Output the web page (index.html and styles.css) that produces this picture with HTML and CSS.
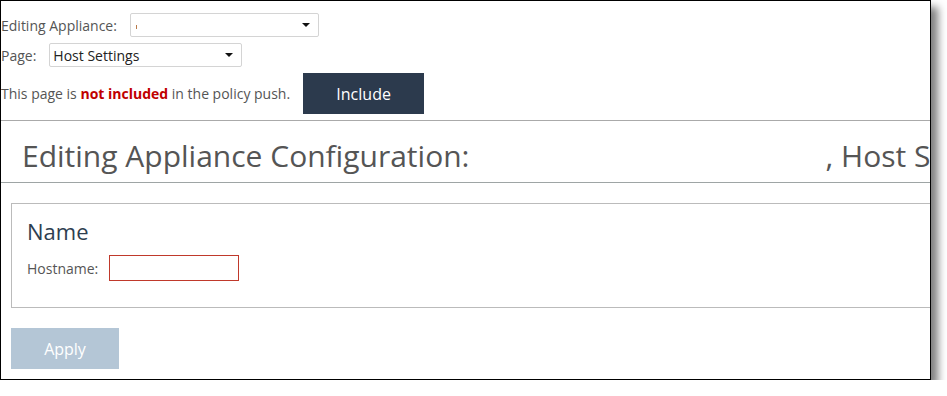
FILE: index.html
```html
<!DOCTYPE html>
<html lang="en">

<head>
    <meta charset="UTF-8">
    <meta name="viewport" content="width=device-width, initial-scale=1.0">
    <title>Editing Appliance Configuration</title>
    <link rel="stylesheet" href="styles.css">
</head>

<body>
    <div class="frame">
        <div class="policy-bar">
            <div class="policy-row">
                <label>Editing Appliance:</label>
                <div class="select select-appliance">
                    <span class="select-value"><span class="stub"></span></span>
                    <span class="caret"></span>
                </div>
            </div>
            <div class="policy-row">
                <label>Page:</label>
                <div class="select select-page">
                    <span class="select-value">Host Settings</span>
                    <span class="caret"></span>
                </div>
            </div>
            <div class="policy-row">
                <span class="push-note">This page is <strong>not included</strong> in the policy push.</span>
                <button class="btn btn-include">Include</button>
            </div>
        </div>

        <div class="page-title">
            <h1>Editing Appliance Configuration:<span class="appliance-name"></span>, Host Settings</h1>
        </div>

        <div class="panel">
            <h2>Name</h2>
            <div class="field">
                <label for="hostname">Hostname:</label>
                <input type="text" id="hostname" class="input-error">
            </div>
        </div>

        <button class="btn btn-apply">Apply</button>
    </div>
</body>

</html>
```

FILE: styles.css
```css
* {
    box-sizing: border-box;
}

body {
    margin: 0;
    background-color: #fff;
    font-family: 'Open Sans', 'Liberation Sans', sans-serif;
    color: #555;
}

.frame {
    width: 931px;
    height: 380px;
    border: 1px solid #000;
    overflow: hidden;
    background-color: #fff;
    box-shadow: 7px 7px 8px rgba(0, 0, 0, 0.5);
}

.policy-bar {
    display: flex;
    flex-direction: column;
    gap: 6px;
    padding-top: 12px;
    padding-bottom: 6px;
    border-bottom: 1px solid #aaa;
}

.policy-row {
    display: flex;
    align-items: center;
    gap: 13px;
    font-size: 14px;
    color: #555;
}

.select {
    display: flex;
    align-items: center;
    justify-content: space-between;
    height: 24px;
    padding: 0 8px 0 3px;
    border: 1px solid #d4d4d4;
    border-radius: 2px;
    background-color: #fff;
}

.select-appliance {
    width: 189px;
}

.select-page {
    width: 193px;
}

.select-value {
    font-size: 14px;
    color: #222;
}

.stub {
    display: inline-block;
    width: 1px;
    height: 4px;
    margin-left: 2px;
    background-color: #b97a4a;
    vertical-align: middle;
}

.caret {
    width: 0;
    height: 0;
    border-left: 4px solid transparent;
    border-right: 4px solid transparent;
    border-top: 4px solid #111;
}

.push-note strong {
    color: #c00000;
    font-weight: bold;
}

.btn {
    border: none;
    color: #fff;
    font-family: 'Open Sans', 'Liberation Sans', sans-serif;
    cursor: pointer;
}

.btn-include {
    width: 121px;
    height: 41px;
    font-size: 16px;
    background-color: #2c3a4d;
}

.page-title {
    height: 62px;
    display: flex;
    align-items: center;
    padding-top: 8px;
    padding-left: 21px;
    border-bottom: 1px solid #9ea5a5;
}

.page-title h1 {
    margin: 0;
    font-size: 30px;
    font-weight: normal;
    color: #555;
    white-space: nowrap;
}

.appliance-name {
    display: inline-block;
    width: 356px;
}

.panel {
    width: 960px;
    margin: 20px 0 20px 10px;
    padding: 12px 15px 26px;
    border: 1px solid #bbb;
}

.panel h2 {
    margin: 0 0 9px;
    font-size: 22px;
    font-weight: normal;
    color: #2e3e50;
}

.field {
    display: flex;
    align-items: center;
    gap: 11px;
    font-size: 14px;
}

.field input {
    width: 130px;
    height: 26px;
    border: 1px solid #ccc;
}

.field .input-error {
    border-color: #c0392b;
}

.btn-apply {
    display: block;
    margin-left: 10px;
    width: 108px;
    height: 41px;
    font-size: 16px;
    background-color: #b4c6d6;
}
```
